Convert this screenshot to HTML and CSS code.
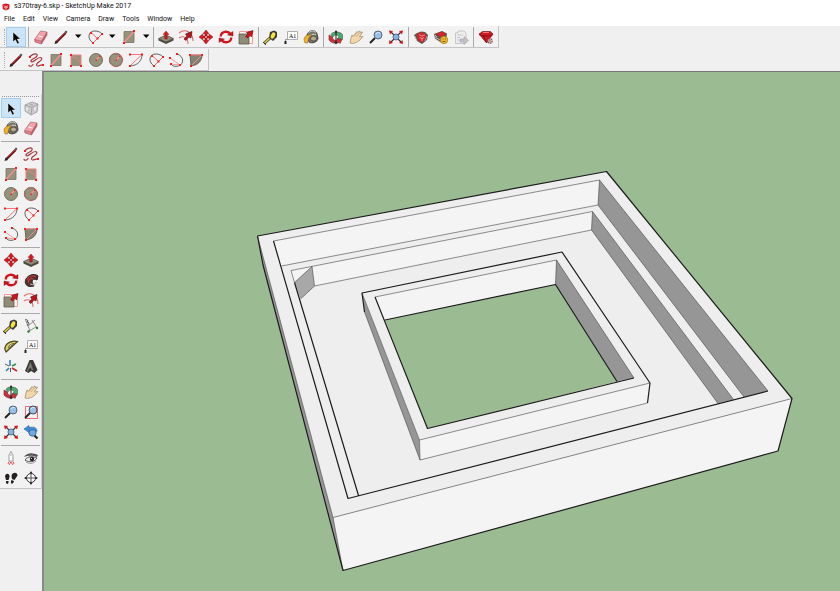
FILE: index.html
```html
<!DOCTYPE html>
<html lang="en">
<head>
  <meta charset="UTF-8" />
  <meta name="viewport" content="width=device-width, initial-scale=1.0" />
  <title>s370tray-6.skp - SketchUp Make 2017</title>
  <link rel="stylesheet" href="styles.css">
</head>
<body>
  <!-- icon set, every icon on a 20x20 grid -->
  <svg class="sprite" aria-hidden="true">
    <symbol id="logo" viewBox="0 0 20 20">
      <path d="M1 4 9 1l10 3-1 11-8 4-8-4z" fill="#d8141c"/>
      <path d="M4 7l6 2 5-2M5 11l5 2 5-3M10 9v9" fill="none" stroke="#fff" stroke-width="1.500"/>
    </symbol>
    <symbol id="select" viewBox="0 0 20 20">
      <path d="M7 5v10l2.400-2.200 2 4.200 1.900-.9-2-4h3.200z" fill="#000" stroke="#fff" stroke-width=".5"/>
    </symbol>
    <symbol id="eraser" viewBox="0 0 20 20">
      <path d="M3.500 12.500 9.500 4 16 5l-5.500 9z" fill="#f4a3ab"/>
      <path d="M3.500 12.500 10.500 14v3l-6.500-2z" fill="#e87985"/>
      <path d="M10.500 14 16 5v3l-5.500 9z" fill="#c95765"/>
      <path d="M3.500 12.500 9.500 4 16 5v3l-5.500 9-6.500-2zM3.500 12.500l7 1.500L16 5M10.500 14v3" fill="none" stroke="#9a5a63" stroke-width=".6"/>
      <path d="M7.500 9l4 1" stroke="#fff" stroke-width="1"/>
    </symbol>
    <symbol id="pencil" viewBox="0 0 20 20">
      <path d="M5.500 15 14.500 6" stroke="#5a1616" stroke-width="2.400"/>
      <path d="M6.500 13.500 14 6" stroke="#c8202a"/>
      <path d="M3.500 17l1-3.500L7 16z" fill="#222"/>
      <path d="M13.500 5 15 3.500 16.500 5 15 6.500z" fill="#4b4b4b"/>
    </symbol>
    <symbol id="freehand" viewBox="0 0 20 20">
      <path d="M4 6.500C8 2.500 12 3.500 11 6c-1 2.500-7 3-6 5.500C6.500 14 13 5 15.500 8c2 2.500-5.500 4.500-5 7 .5 2.500 3.500-.5 6.500 0M3 15.500c1.500 1.500 3 .5 4-1" fill="none" stroke="#a63a40" stroke-width="1.200" stroke-linecap="round"/>
      <path d="M3 6h2v2H3zM16 14h2v2h-2z" fill="#e22"/>
    </symbol>
    <symbol id="rect" viewBox="0 0 20 20">
      <path d="M5 4.500h10v11H5z" fill="#96937d" stroke="#77755f" stroke-width=".8"/>
      <path d="M5 15.500l10-11" stroke="#ff8f92" stroke-width="1.200"/>
      <path d="M4 15h2v2H4zM14 3h2v2h-2z" fill="#e22"/>
    </symbol>
    <symbol id="rotrect" viewBox="0 0 20 20">
      <path d="M5 5h10v11H5z" fill="#96937d"/>
      <path d="M5 16V5h10v11M5 7c6 0 10 4 10 9" fill="none" stroke="#f47b7e"/>
      <path d="M4 4h2v2H4zM14 15h2v2h-2zM4 15h2v2H4z" fill="#e22"/>
    </symbol>
    <symbol id="circle" viewBox="0 0 20 20">
      <circle cx="10" cy="10" r="6.500" fill="#96937d" stroke="#5e5c4a" stroke-width=".8"/>
      <path d="M10 10l4-4" stroke="#ff8f92" stroke-width="1.200"/>
      <path d="M9.500 9.500H11V11H9.500zM13 5.500h1.500V7H13z" fill="#e22"/>
    </symbol>
    <symbol id="polygon" viewBox="0 0 20 20">
      <circle cx="10" cy="10" r="6.700" fill="none" stroke="#ef6c70"/>
      <path d="M7 4h6l3.500 5-2 6-5 1.500L4 13 3.700 7z" fill="#96937d" stroke="#6b6955" stroke-width=".8"/>
      <path d="M10 10l4-4" stroke="#ff8f92" stroke-width="1.200"/>
      <path d="M9.500 9.500H11V11H9.500zM13 5.500h1.500V7H13z" fill="#e22"/>
    </symbol>
    <symbol id="arc" viewBox="0 0 20 20">
      <path d="M16 4.500c0 6-4 11-12 11.500" fill="none" stroke="#555" stroke-width=".9"/>
      <path d="M4 4.500h12L4 16" fill="none" stroke="#f4686c" stroke-width=".9"/>
      <path d="M3 3.500h2v2H3zM15 3.500h2v2h-2zM3 15h2v2H3z" fill="#e22"/>
    </symbol>
    <symbol id="arc2" viewBox="0 0 20 20">
      <path d="M8 16C1 11 4 3.500 10 4c3 0 5.500 1 7 3" fill="none" stroke="#555" stroke-width=".9"/>
      <path d="M8 16l9-9M6 5.500l6.500 6" fill="none" stroke="#f4686c"/>
      <path d="M7 15h2v2H7zM16 6h2v2h-2zM5 5h2v2H5zM11.500 10.500h2v2h-2z" fill="#e22"/>
    </symbol>
    <symbol id="arc3" viewBox="0 0 20 20">
      <path d="M11 4c7 2 7.500 10 1.500 12-3.500 1-6.500 0-7.500-2" fill="none" stroke="#555" stroke-width=".9"/>
      <path d="M4 8l10 7-9-1" fill="none" stroke="#f4989a"/>
      <path d="M10 3h2v2h-2zM3 7h2v2H3zM4 13h2v2H4zM13 14h2v2h-2z" fill="#e22"/>
    </symbol>
    <symbol id="pie" viewBox="0 0 20 20">
      <path d="M4 5h12c0 6-4 10-11 11z" fill="#858371" stroke="#55533f" stroke-width=".8"/>
      <path d="M4 5h12L5 16" fill="none" stroke="#f08789"/>
      <path d="M3 4h2v2H3zM15 4h2v2h-2zM4 15h2v2H4z" fill="#e22"/>
    </symbol>
    <symbol id="pushpull" viewBox="0 0 20 20">
      <path d="M2.500 11.500 10 8l7.500 3.500v2L10 17l-7.500-3.500z" fill="#4c4a3d"/>
      <path d="M2.500 11.500 10 8l7.500 3.500L10 15z" fill="#8f8c77" stroke="#444" stroke-width=".5"/>
      <path d="M10 4l3 3.500h-1.800V12H8.800V7.500H7z" fill="#e0141d" stroke="#7c090e" stroke-width=".4"/>
    </symbol>
    <symbol id="offset" viewBox="0 0 20 20">
      <path d="M3 6c6-5 14-1 14 8M3 11c5-3 9 0 9 6" fill="none" stroke="#e4676b" stroke-width="1.100"/>
      <path d="M8 12l3-3-1.500-2L16 4.500 15 11l-2-1-3 3.500z" fill="#c0131b" stroke="#3d1213" stroke-width=".6"/>
    </symbol>
    <symbol id="move" viewBox="0 0 20 20">
      <path d="M8.500 8.500h3v3h-3z" fill="#fff" stroke="#eee"/>
      <path d="M10 3l3 3.800h-2V9H9V6.800H7zM10 17l3-3.800h-2V11H9v2.200H7zM3 10l3.800-3v2H9v2H6.800v2zM17 10l-3.800-3v2H11v2h2.200v2z" fill="#dd151d" stroke="#871116" stroke-width=".5"/>
    </symbol>
    <symbol id="rotate" viewBox="0 0 20 20">
      <path d="M4.700 9.500C5 4 12 3.500 14.500 7M15.300 10.500C15 16 8 16.500 5.500 13" fill="none" stroke="#d0141c" stroke-width="2.300"/>
      <path d="M17 4.500V9l-5.500-1zM3 15.500V11l5.500 1z" fill="#d0141c" stroke="#7c1014" stroke-width=".4"/>
    </symbol>
    <symbol id="followme" viewBox="0 0 20 20">
      <path d="M13 16C5 18 3 13 5 9c2-4 8-6 12-3l-1 4c-4-2-7 0-3 6z" fill="#57302c" stroke="#222" stroke-width="1"/>
      <path d="M6 10c1-4 6-5 9-3M7.500 13c-1-3 2-5 5-4" fill="none" stroke="#c3393d" stroke-width="1.200"/>
      <path d="M9 14l4 1 2-3" fill="none" stroke="#bbb"/>
    </symbol>
    <symbol id="scale" viewBox="0 0 20 20">
      <path d="M3.500 4.500h13v12h-13z" fill="#fff3f3" stroke="#f29b9d"/>
      <path d="M3 7h10v10H3z" fill="#8f8c77" stroke="#5d5b49" stroke-width=".8"/>
      <path d="M9.500 9.500 12 7l-1.500-1.500L17 3.500 15.500 10 14 8.500l-2.500 2.500z" fill="#d0141c" stroke="#65090d" stroke-width=".6"/>
    </symbol>
    <symbol id="tape" viewBox="0 0 20 20">
      <path d="M3 16.500 9 11" stroke="#333" stroke-width="3"/>
      <path d="M3.500 16 9 11" stroke="#ead632" stroke-width="1.500"/>
      <path d="M9 5l4-1.500 3 1.500v5l-4 4-4-3z" fill="#3a3a36"/>
      <ellipse cx="12" cy="8.500" rx="2" ry="3.300" fill="#f6e33a" transform="rotate(25 12 8.500)"/>
      <path d="M2 15l3 3" stroke="#333"/>
    </symbol>
    <symbol id="label" viewBox="0 0 20 20">
      <path d="M6.500 4.500h10v8h-10z" fill="#fff" stroke="#a5a5a5" stroke-width=".9"/>
      <path d="M6.500 12.500h-2V15" fill="none" stroke="#888" stroke-width=".9"/>
      <path d="M3.500 14h2v3h-2z" fill="#222"/>
      <text x="8" y="11" class="icon-text">A1</text>
    </symbol>
    <symbol id="paint" viewBox="0 0 20 20">
      <path d="M6 8c1-5 9-6 10-1l1 4c0 4-6 6-9 4z" fill="#77746a" stroke="#34332f" stroke-width=".9"/>
      <ellipse cx="12.500" cy="11.500" rx="3" ry="2.500" fill="#b3ac91" stroke="#333" stroke-width=".7"/>
      <path d="M7 6.500c2-3 6-3 8-1M9 8.500c2-2 4-1 6-1" fill="none" stroke="#ddd" stroke-width=".9"/>
      <path d="M4 16c-2.500-5 0-9 7-8-4 1.500-3 4.500-4.500 8z" fill="#edb02a" stroke="#806416" stroke-width=".5"/>
    </symbol>
    <symbol id="orbit" viewBox="0 0 20 20">
      <path d="M5 7.500C6 4.500 14 4 16.500 7.500v5l-4.500-1 1-2C11 7.500 8 7.500 7 10z" fill="#4fa870" stroke="#35604a" stroke-width=".6"/>
      <path d="M3 8v5c2 3 7 4 10 2.500l1 1 2-4-5-1v2c-3 0-4.500-1-4.500-3.500z" fill="#c7353b" stroke="#6d2a2d" stroke-width=".6"/>
      <path d="M10 4v12" stroke="#222"/>
      <path d="M10 3l1.500 2.500h-3zM10 17.500l1.500-2.500h-3z" fill="#222"/>
    </symbol>
    <symbol id="pan" viewBox="0 0 20 20">
      <path d="M4 16l1-5 1-3 1 1.500L11 4.500l.8.800L14 4l.3 1.500L16.500 5l-3 5 3.500-.5-3 3.500-3.500 2.500-4 1z" fill="#f1d7aa" stroke="#9d8867" stroke-width=".7"/>
      <path d="M8 9.500l3.500-4M10 10l4-4.500" stroke="#b49b73" stroke-width=".6"/>
    </symbol>
    <symbol id="zoom" viewBox="0 0 20 20">
      <path d="M4 16 9 11" stroke="#222" stroke-width="2"/>
      <circle cx="12" cy="8" r="4" fill="#9bc0e6" stroke="#53677e"/>
      <path d="M10 7c1-2 3-2 4-1" fill="none" stroke="#d3e7fa"/>
    </symbol>
    <symbol id="zoomwin" viewBox="0 0 20 20">
      <path d="M4.500 4.500h12v12h-12z" fill="none" stroke="#ef6a6f"/>
      <path d="M4 16 9 11" stroke="#222" stroke-width="2"/>
      <circle cx="12" cy="8" r="4" fill="#9bc0e6" stroke="#404a55"/>
      <path d="M10 7c1-2 3-2 4-1" fill="none" stroke="#d3e7fa"/>
    </symbol>
    <symbol id="extents" viewBox="0 0 20 20">
      <path d="M5 5l10 10M15 5 5 15" stroke="#333" stroke-width="1.200"/>
      <circle cx="10" cy="10" r="3" fill="#86b4e2" stroke="#4d6279" stroke-width=".9"/>
      <path d="M3 3.500l4 .5-3 3.500zM17 3.500l-4 .5 3 3.500zM17 17l-.5-4-3.500 3zM3 17l.5-4 3.500 3z" fill="#d9141c"/>
    </symbol>
    <symbol id="previous" viewBox="0 0 20 20">
      <path d="M12 12l4.500 4.500" stroke="#222" stroke-width="2.200"/>
      <circle cx="11.500" cy="10.500" r="3.700" fill="#6fa9df" stroke="#345b82" stroke-width=".8"/>
      <path d="M3 7l5-3.500v2c5-1 8 0 8 4-2-2-4-2-8-1v2z" fill="#3e8ddd" stroke="#235c97" stroke-width=".6"/>
    </symbol>
    <symbol id="component" viewBox="0 0 20 20">
      <path d="M4 7l7-3 6 2-1 8-6 3-6-4z" fill="#cdcdcd" stroke="#999" stroke-width=".8"/>
      <path d="M4 7l7 2.500L17 6M11 9.500 10 17M7.500 12l1 1M13 11v2M9 6.500l3 .5" fill="none" stroke="#999" stroke-width=".8"/>
      <path d="M5 9l2 1v3l-2-1zM13 10l2-1v3l-2 1z" fill="#e9e9e9"/>
    </symbol>
    <symbol id="warehouse" viewBox="0 0 20 20">
      <path d="M3 8l3-2 4-1.500 4 .5 3 3-1 5-5 4-5-3z" fill="#5d554d"/>
      <path d="M6 7l5-2 4 3-1 5-3 2.500L7 13z" fill="#d6232c"/>
      <path d="M8 7.500l3 1.500 3-1M8.500 10.500l2.500 1 2-1M11 11v3" fill="none" stroke="#ffa7aa" stroke-width=".8"/>
      <path d="M4 9l2 5M16 9l-2 5" stroke="#b8b8b8" stroke-width=".8"/>
    </symbol>
    <symbol id="extwarehouse" viewBox="0 0 20 20">
      <path d="M3 7l4-1.500 4-1.500 5 2.500-1 7-5 2-6-4z" fill="#5d554d"/>
      <path d="M6 6.500 11 4.500l4 2.500-4 3-4-1z" fill="#d6232c"/>
      <path d="M4 10l5 3M4 8l2 2" stroke="#ccc" stroke-width=".9"/>
      <circle cx="13" cy="13" r="3.700" fill="#f2b82c" stroke="#a87915" stroke-width=".7"/>
      <path d="M11.500 12h1M14 12h1M11.500 14.500h3" stroke="#805a0a"/>
    </symbol>
    <symbol id="layout" viewBox="0 0 20 20">
      <path d="M4.500 6 7 5.500V4h6l2 2v6.500l-2 4H4.500z" fill="#eee" stroke="#bbb" stroke-width=".8"/>
      <path d="M6 8h6M6 10.500h3M6 13h2" stroke="#c4c4c4"/>
      <path d="M9 12h4v-2.500l4.500 4-4.500 4V15H9z" fill="#c3c3c3" stroke="#9f9f9f" stroke-width=".6"/>
    </symbol>
    <symbol id="ruby" viewBox="0 0 20 20">
      <path d="M3 7l3.500-2.500h8L17 7l-6.500 9z" fill="#cf1a22" stroke="#650b10" stroke-width=".6"/>
      <path d="M3 7.500c4 2 10 2 14 0M7 8.500l3.500 7" fill="none" stroke="#7d0b10" stroke-width=".8"/>
      <path d="M7 5.500h6" stroke="#f77"/>
      <circle cx="14" cy="14" r="2.200" fill="#ddd" stroke="#8e4a4d" stroke-width="1.200" stroke-dasharray="1.500 .5"/>
      <circle cx="14" cy="14" r=".8" fill="#8e3438"/>
    </symbol>
    <symbol id="dimension" viewBox="0 0 20 20">
      <path d="M7 10l7-6M8 15l7-4M5 5l4 10M11 4l5 8" stroke="#777" stroke-width=".8"/>
      <path d="M4 4c2-1 4 1 2 2 3 0 2 3 0 3" fill="none" stroke="#333" stroke-width=".9"/>
      <circle cx="7.500" cy="15.500" r="1.200" fill="#237c2c"/>
      <circle cx="16" cy="12" r="1.200" fill="#237c2c"/>
    </symbol>
    <symbol id="protractor" viewBox="0 0 20 20">
      <path d="M5 16C1.500 10 8 3.500 16.500 5.500z" fill="#ddd264" stroke="#4a4723" stroke-width="1.200"/>
      <path d="M7.500 12c0-3 3-4.500 5.500-4.500z" fill="#f3f1e1" stroke="#555229" stroke-width=".8"/>
    </symbol>
    <symbol id="axes" viewBox="0 0 20 20">
      <path d="M9 10V4M8 12l-3 3" stroke="#2f7fc4" stroke-width="1.600"/>
      <path d="M11 12l5 3" stroke="#c4262c" stroke-width="1.600"/>
      <path d="M11 10l4-2" stroke="#339448" stroke-width="1.600"/>
      <path d="M4 8l4 2M9.500 12v4" stroke="#555"/>
    </symbol>
    <symbol id="text3d" viewBox="0 0 20 20">
      <path d="M4 15 8.500 4H12l4.500 10-3 3-3.500-2-2.500 2z" fill="#393936"/>
      <path d="M5.500 15 9.500 5l3 9-1.500 1-1.500-3-1.500 1-1 3z" fill="#7d7c73" stroke="#222" stroke-width=".4"/>
    </symbol>
    <symbol id="camera" viewBox="0 0 20 20">
      <path d="M8 13V7l2-3.500L12 7v6z" fill="#fff" stroke="#888" stroke-width=".8"/>
      <path d="M9 7h2" stroke="#999" stroke-width=".8"/>
      <path d="M8 13.500l-1 2.500M12 13.500l1 2.500M8 17l2-3 2 3" fill="none" stroke="#de4349" stroke-width=".9"/>
    </symbol>
    <symbol id="look" viewBox="0 0 20 20">
      <path d="M3 9c3-5 9-4.500 14-2l-1 2C11 7 7 7.500 3 9z" fill="#555"/>
      <path d="M4 12c3-4.500 8-3.500 12-2-2 4-8 5-12 2z" fill="#e9e9e9" stroke="#444" stroke-width=".9"/>
      <circle cx="11" cy="11" r="2.200" fill="#222"/>
      <path d="M10 10.500h1" stroke="#fff" stroke-width=".8"/>
      <path d="M5 14c3 2 7 2 10-1" fill="none" stroke="#888" stroke-width=".8"/>
    </symbol>
    <symbol id="walk" viewBox="0 0 20 20">
      <path d="M4 8c1-3.500 5-2.500 4.500 1L7.500 12H5zM5 13h2.500c.5 4-3 4-2.500 0zM10.500 8c.5-4 6-4.500 6-.5L13.500 12l-2.500-1zM10.500 12l2.500 1c-1 4.500-4.500 3-2.500-1z" fill="#222"/>
    </symbol>
    <symbol id="section" viewBox="0 0 20 20">
      <circle cx="10" cy="10" r="4.500" fill="#fff" stroke="#333"/>
      <path d="M4 10h12M10 4v12" stroke="#444" stroke-width=".9"/>
      <path d="M10 3l1.500 2.500h-3zM10 17l1.500-2.500h-3zM3 10l2.500-1.500v3zM17 10l-2.500-1.500v3z" fill="#222"/>
    </symbol>
    <symbol id="down" viewBox="0 0 14 20">
      <path d="M4 7.500h6.500L7.200 11z" fill="#000"/>
    </symbol>
  </svg>

  <header>
    <div class="titlebar">
      <svg class="app-logo" aria-hidden="true"><use href="#logo"/></svg>
      <span>s370tray-6.skp - SketchUp Make 2017</span>
    </div>

    <nav class="menubar">
      <button>File</button>
      <button>Edit</button>
      <button>View</button>
      <button>Camera</button>
      <button>Draw</button>
      <button>Tools</button>
      <button>Window</button>
      <button>Help</button>
    </nav>
  </header>

  <div class="toolbars">
    <div class="toolbar" role="toolbar" aria-label="Getting Started">
      <div class="group">
        <button class="tool active" aria-label="Select"><svg><use href="#select"/></svg></button>
      </div>
      <div class="group menus">
        <button class="tool" aria-label="Eraser"><svg><use href="#eraser"/></svg></button>
        <button class="tool" aria-label="Line"><svg><use href="#pencil"/></svg></button>
        <button class="tool drop" aria-label="More lines"><svg><use href="#down"/></svg></button>
        <button class="tool" aria-label="2 Point Arc"><svg><use href="#arc2"/></svg></button>
        <button class="tool drop" aria-label="More arcs"><svg><use href="#down"/></svg></button>
        <button class="tool" aria-label="Rectangle"><svg><use href="#rect"/></svg></button>
        <button class="tool drop" aria-label="More shapes"><svg><use href="#down"/></svg></button>
      </div>
      <div class="group">
        <button class="tool" aria-label="Push/Pull"><svg><use href="#pushpull"/></svg></button>
        <button class="tool" aria-label="Offset"><svg><use href="#offset"/></svg></button>
        <button class="tool" aria-label="Move"><svg><use href="#move"/></svg></button>
        <button class="tool" aria-label="Rotate"><svg><use href="#rotate"/></svg></button>
        <button class="tool" aria-label="Scale"><svg><use href="#scale"/></svg></button>
      </div>
      <div class="group">
        <button class="tool" aria-label="Tape Measure"><svg><use href="#tape"/></svg></button>
        <button class="tool" aria-label="Text"><svg><use href="#label"/></svg></button>
        <button class="tool" aria-label="Paint Bucket"><svg><use href="#paint"/></svg></button>
      </div>
      <div class="group">
        <button class="tool" aria-label="Orbit"><svg><use href="#orbit"/></svg></button>
        <button class="tool" aria-label="Pan"><svg><use href="#pan"/></svg></button>
        <button class="tool" aria-label="Zoom"><svg><use href="#zoom"/></svg></button>
        <button class="tool" aria-label="Zoom Extents"><svg><use href="#extents"/></svg></button>
      </div>
      <div class="group">
        <button class="tool" aria-label="3D Warehouse"><svg><use href="#warehouse"/></svg></button>
        <button class="tool" aria-label="Share Model"><svg><use href="#extwarehouse"/></svg></button>
        <button class="tool" aria-label="Send to LayOut"><svg><use href="#layout"/></svg></button>
      </div>
      <div class="group">
        <button class="tool" aria-label="Extension Warehouse"><svg><use href="#ruby"/></svg></button>
      </div>
    </div>

    <div class="toolbar" role="toolbar" aria-label="Drawing">
      <div class="group">
        <button class="tool" aria-label="Line"><svg><use href="#pencil"/></svg></button>
        <button class="tool" aria-label="Freehand"><svg><use href="#freehand"/></svg></button>
        <button class="tool" aria-label="Rectangle"><svg><use href="#rect"/></svg></button>
        <button class="tool" aria-label="Rotated Rectangle"><svg><use href="#rotrect"/></svg></button>
        <button class="tool" aria-label="Circle"><svg><use href="#circle"/></svg></button>
        <button class="tool" aria-label="Polygon"><svg><use href="#polygon"/></svg></button>
        <button class="tool" aria-label="Arc"><svg><use href="#arc"/></svg></button>
        <button class="tool" aria-label="2 Point Arc"><svg><use href="#arc2"/></svg></button>
        <button class="tool" aria-label="3 Point Arc"><svg><use href="#arc3"/></svg></button>
        <button class="tool" aria-label="Pie"><svg><use href="#pie"/></svg></button>
      </div>
    </div>
  </div>

  <div class="workspace">
    <aside class="dock">
      <div class="palette" role="toolbar" aria-label="Large Tool Set">
        <div class="set">
          <button class="tool active" aria-label="Select"><svg><use href="#select"/></svg></button>
          <button class="tool" aria-label="Make Component"><svg><use href="#component"/></svg></button>
          <button class="tool" aria-label="Paint Bucket"><svg><use href="#paint"/></svg></button>
          <button class="tool" aria-label="Eraser"><svg><use href="#eraser"/></svg></button>
        </div>
        <div class="set">
          <button class="tool" aria-label="Line"><svg><use href="#pencil"/></svg></button>
          <button class="tool" aria-label="Freehand"><svg><use href="#freehand"/></svg></button>
          <button class="tool" aria-label="Rectangle"><svg><use href="#rect"/></svg></button>
          <button class="tool" aria-label="Rotated Rectangle"><svg><use href="#rotrect"/></svg></button>
          <button class="tool" aria-label="Circle"><svg><use href="#circle"/></svg></button>
          <button class="tool" aria-label="Polygon"><svg><use href="#polygon"/></svg></button>
          <button class="tool" aria-label="Arc"><svg><use href="#arc"/></svg></button>
          <button class="tool" aria-label="2 Point Arc"><svg><use href="#arc2"/></svg></button>
          <button class="tool" aria-label="3 Point Arc"><svg><use href="#arc3"/></svg></button>
          <button class="tool" aria-label="Pie"><svg><use href="#pie"/></svg></button>
        </div>
        <div class="set">
          <button class="tool" aria-label="Move"><svg><use href="#move"/></svg></button>
          <button class="tool" aria-label="Push/Pull"><svg><use href="#pushpull"/></svg></button>
          <button class="tool" aria-label="Rotate"><svg><use href="#rotate"/></svg></button>
          <button class="tool" aria-label="Follow Me"><svg><use href="#followme"/></svg></button>
          <button class="tool" aria-label="Scale"><svg><use href="#scale"/></svg></button>
          <button class="tool" aria-label="Offset"><svg><use href="#offset"/></svg></button>
        </div>
        <div class="set">
          <button class="tool" aria-label="Tape Measure"><svg><use href="#tape"/></svg></button>
          <button class="tool" aria-label="Dimensions"><svg><use href="#dimension"/></svg></button>
          <button class="tool" aria-label="Protractor"><svg><use href="#protractor"/></svg></button>
          <button class="tool" aria-label="Text"><svg><use href="#label"/></svg></button>
          <button class="tool" aria-label="Axes"><svg><use href="#axes"/></svg></button>
          <button class="tool" aria-label="3D Text"><svg><use href="#text3d"/></svg></button>
        </div>
        <div class="set">
          <button class="tool" aria-label="Orbit"><svg><use href="#orbit"/></svg></button>
          <button class="tool" aria-label="Pan"><svg><use href="#pan"/></svg></button>
          <button class="tool" aria-label="Zoom"><svg><use href="#zoom"/></svg></button>
          <button class="tool" aria-label="Zoom Window"><svg><use href="#zoomwin"/></svg></button>
          <button class="tool" aria-label="Zoom Extents"><svg><use href="#extents"/></svg></button>
          <button class="tool" aria-label="Previous"><svg><use href="#previous"/></svg></button>
        </div>
        <div class="set">
          <button class="tool" aria-label="Position Camera"><svg><use href="#camera"/></svg></button>
          <button class="tool" aria-label="Look Around"><svg><use href="#look"/></svg></button>
          <button class="tool" aria-label="Walk"><svg><use href="#walk"/></svg></button>
          <button class="tool" aria-label="Section Plane"><svg><use href="#section"/></svg></button>
        </div>
      </div>
    </aside>

    <main class="viewport">
      <svg class="model" viewBox="44 72 796 519" preserveAspectRatio="xMinYMin meet" role="img" aria-label="Tray model">
        <!-- outer walls -->
        <path class="shade" d="M257.500 236 263 265 343 570.500 333 517.500z"/>
        <path class="top" d="M257.500 236 606.500 171.500 792 398.500 333 517.500z"/>
        <path class="face" d="M333 517.500 792 398.500 778 451 343 570.500z"/>
        <!-- back wall and ledges -->
        <path class="face" d="M273.500 241 599.500 180 598 205 281.500 266z"/>
        <path class="face" d="M291 270.500 592.500 211.500 591.500 230 314.500 286 294.500 282.500z"/>
        <path class="shade" d="M599.500 180 598 205 744 397 768 391z"/>
        <path class="shade" d="M592.500 211.500 591.500 230 718 403.500 733.500 399.500z"/>
        <path class="notch" d="M294.500 282.500 312 266.500 314.500 286 300.500 299z"/>
        <!-- inner frame -->
        <path class="shade" d="M362 293 364.500 312 420 460 419.500 440z"/>
        <path class="top" d="M362 293 562 252 650 383 419.500 440z"/>
        <path class="face" d="M419.500 440 650 383 647.500 403 420 460z"/>
        <path class="face" d="M375 297 556.500 260 555.500 284.500 385 320z"/>
        <path class="shade" d="M556.500 260 555.500 284.500 617 381.500 634 378z"/>
        <path class="ground" d="M385 320 555.500 284.500 617 381.500 427.500 428.500z"/>

        <path class="thin" d="M257.500 236 333 517.500 792 398.500M333 517.500 343 570.500M273.500 241 599.500 180 768 391M599.500 180 598 205 744 397M598 205 281.500 266M294.500 282.500 291 270.500 592.500 211.500 733.500 399.500M592.500 211.500 591.500 230 718 403.500M591.500 230 314.500 286M294.500 282.500 312 266.500 314.500 286 300.500 299M362 293 419.500 440 650 383M419.500 440 420 460 647.500 403M364.500 312 420 460M375 297 556.500 260 634 378M556.500 260 555.500 284.500"/>
        <path class="edge" d="M257.500 236 606.500 171.500 792 398.500 778 451 343 570.500 263 265zM273.500 241 348 498.500 768 391M294.500 282.500 358.500 495.500M364.500 312 362 293 562 252 650 383 647.500 403M375 297 427.500 428.500 634 378M385 320 555.500 284.500 617 381.500"/>
      </svg>
    </main>
  </div>
</body>
</html>
```

FILE: styles.css
```css
* {
  box-sizing: border-box;
}

body {
  margin: 0;
  min-height: 100vh;
  display: flex;
  flex-direction: column;
  background: #f0f0f0;
  color: #111;
  font-family: Roboto, "Open Sans", sans-serif;
  font-size: 7px;
  line-height: 13px;
}

button {
  margin: 0;
  padding: 0;
  border: 0;
  background: none;
  color: inherit;
  font: inherit;
}

.sprite {
  display: none;
}

.icon-text {
  font-family: "Liberation Serif", serif;
  font-size: 6px;
}

header {
  background: #fff;
}

.titlebar {
  display: flex;
  align-items: center;
  gap: 4px;
  height: 13px;
  padding-left: 2px;
}

.app-logo {
  width: 8px;
  height: 8px;
}

.menubar {
  display: flex;
  height: 13px;
}

.menubar button {
  padding: 0 4px;
}

/* horizontal toolbars */
.toolbars {
  display: flex;
  flex-direction: column;
  align-items: flex-start;
  gap: 1px;
}

.toolbar {
  display: flex;
  height: 22px;
  padding: 1px 0 0 4px;
  background: #f2f2f2;
  border-right: 1px solid #c4c4c4;
  border-bottom: 1px solid #c4c4c4;
}

.toolbar::before {
  content: "";
  width: 0;
  margin: 2px 0;
  border-left: 1px dotted #aaa;
}

.group {
  display: flex;
  padding: 0 2px;
  border-left: 1px solid #aaa;
}

.group:first-child {
  padding-left: 1px;
  border-left: 0;
}

.group.menus {
  padding-right: 0;
}

.tool {
  width: 20px;
  height: 20px;
}

.tool svg {
  display: block;
  width: 100%;
  height: 100%;
}

.tool.drop {
  width: 14px;
}

.tool.active {
  background: #cce4f7;
  outline: 1px solid #a5cdee;
  outline-offset: -1px;
}

/* left dock + model */
.workspace {
  flex: 1;
  display: flex;
}

.dock {
  width: 42px;
  padding-top: 23px;
}

.palette {
  padding: 2px 1px 0 1px;
  background: #f2f2f2;
  border-right: 1px solid #d0d0d0;
  border-bottom: 1px solid #c4c4c4;
}

.palette::before {
  content: "";
  display: block;
  margin: 0 1px 1px;
  border-top: 1px dotted #999;
}

.set {
  display: grid;
  grid-template-columns: repeat(2, 20px);
}

.set + .set {
  margin-top: 3px;
  padding-top: 2px;
  border-top: 1px solid #aaa;
}

.viewport {
  flex: 1;
  display: flex;
  background: #9bbc92;
  border-top: 1px solid #777;
  border-left: 2px solid #888;
}

.model {
  flex: 1;
  min-width: 0;
}

.model path {
  stroke-linejoin: round;
}

.top {
  fill: #eee;
}

.face {
  fill: #f4f4f4;
}

.shade {
  fill: #969696;
}

.notch {
  fill: #a8a8a8;
}

.ground {
  fill: #9bbc92;
}

.thin {
  fill: none;
  stroke: #444;
  stroke-width: 0.6;
}

.edge {
  fill: none;
  stroke: #1c1c1c;
  stroke-width: 1.2;
}
```
